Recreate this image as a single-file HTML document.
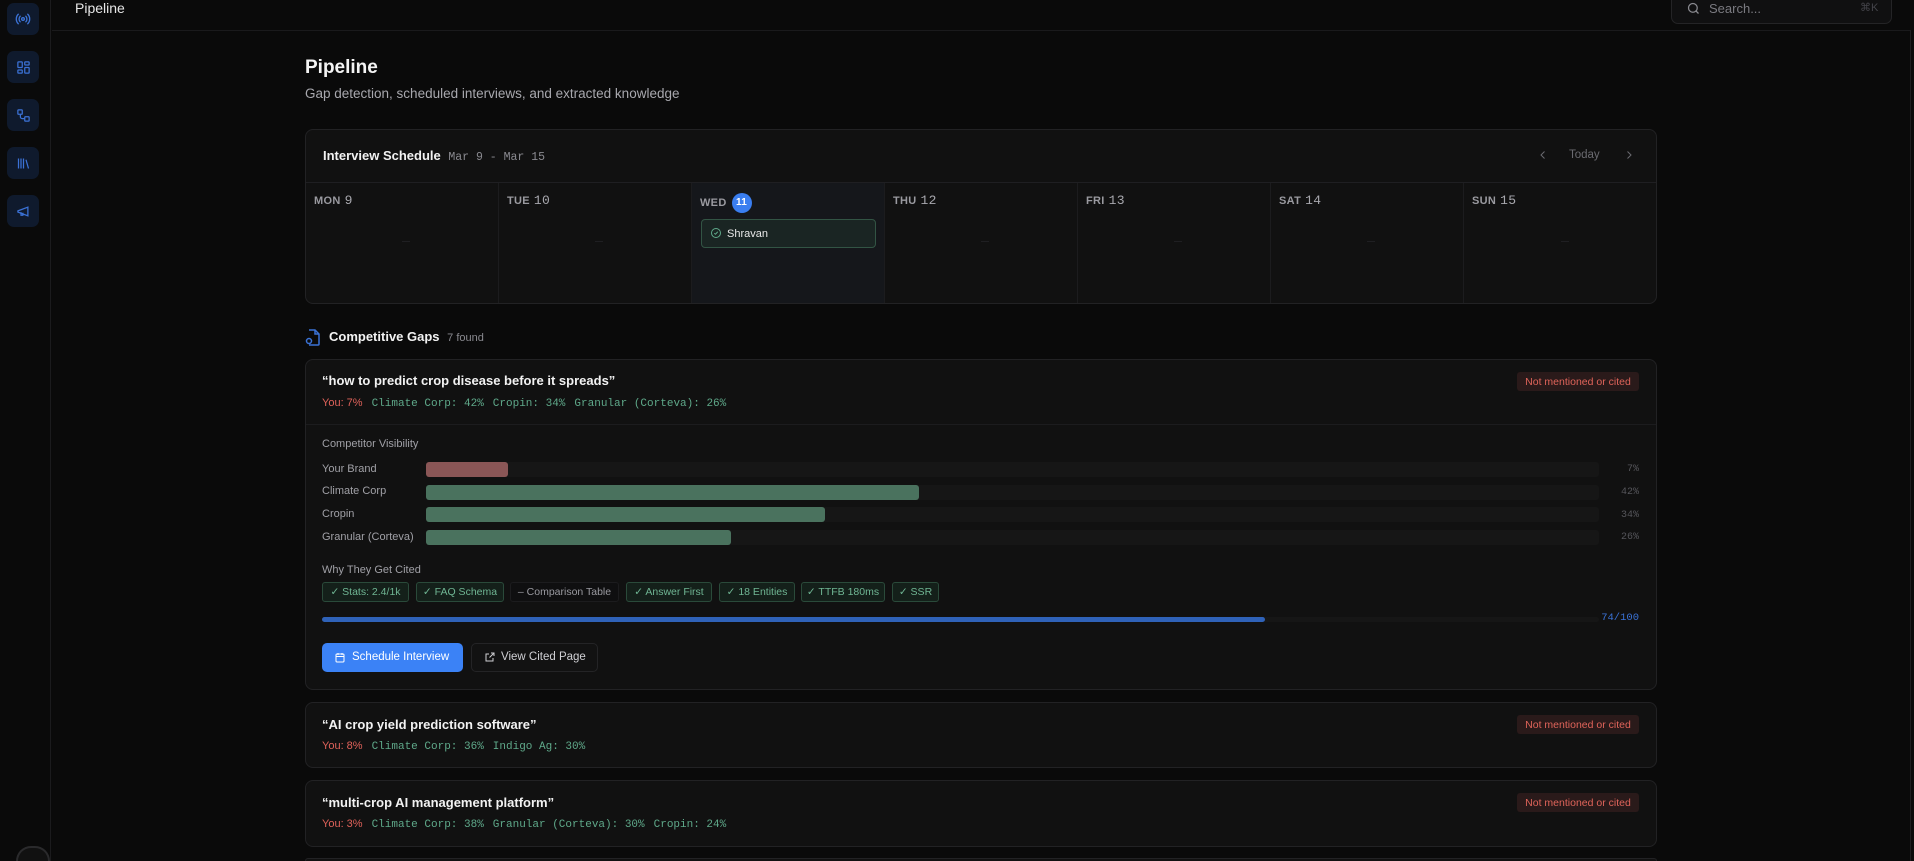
<!DOCTYPE html>
<html style="width:1914px;height:861px;overflow:hidden"><head><meta charset="utf-8"><style>
*{box-sizing:border-box;margin:0;padding:0}
body{width:1914px;height:861px;overflow:hidden;background:#0a0a0a;font-family:"Liberation Sans",sans-serif;color:#e8e8e8;position:relative}
.a{position:absolute}
.mono{font-family:"Liberation Mono",monospace}
.side{left:0;top:0;width:51px;height:861px;border-right:1px solid #1b1b1d;background:#0a0a0a}
.sib{left:7px;width:32px;height:32px;border-radius:7px;background:#0f1a2d;display:flex;align-items:center;justify-content:center}
.card{background:#111111;border:1px solid #222224;border-radius:8px}
.day{top:182px;height:120px;border-right:1px solid #1c1c1e}
.dl{position:absolute;left:8px;top:10px;font-size:11px;color:#9a9aa0;font-weight:bold;letter-spacing:.3px}
.dl b{font-family:"Liberation Mono",monospace;font-size:13px;color:#a8a8ae;font-weight:normal;margin-left:4px}
.dash{position:absolute;left:50%;top:58px;width:8px;height:1px;background:#1f1f22}
.lbl{font-size:11px;color:#a0a0a6}
.track{left:426px;width:1173px;height:15px;background:#161616;border-radius:3px}
.bar{left:426px;height:15px;border-radius:3px;background:#4a725e}
.pct{right:275px;font-size:10px;color:#55555a;font-family:"Liberation Mono",monospace}
.tag{top:582px;height:20px;border:1px solid #2a4a3a;background:#14201a;border-radius:3px;color:#6fb593;font-size:10.5px;display:flex;align-items:center;justify-content:center}
.badge{left:1517px;width:122px;height:19px;background:#2a1a1a;border-radius:3px;color:#e0645a;font-size:10.5px;display:flex;align-items:center;justify-content:center}
.qt{font-size:13px;font-weight:bold;color:#f2f2f2}
.st{font-size:11px}
.st .y{color:#e0625a;font-family:"Liberation Sans",sans-serif}
.st .g{color:#5fa98a;font-family:"Liberation Mono",monospace;margin-left:9px}
</style></head><body>
<div class="a side"></div>
<div class="a sib" style="top:3px"><svg width="16" height="16" viewBox="0 0 24 24" fill="none" stroke="#3b72d6" stroke-width="2" stroke-linecap="round"><circle cx="12" cy="12" r="2"/><path d="M16.2 7.8a6 6 0 0 1 0 8.4M7.8 16.2a6 6 0 0 1 0-8.4M19.1 4.9a10 10 0 0 1 0 14.2M4.9 19.1a10 10 0 0 1 0-14.2"/></svg></div>
<div class="a sib" style="top:51px"><svg width="15" height="15" viewBox="0 0 24 24" fill="none" stroke="#3b72d6" stroke-width="2"><rect x="3" y="3" width="7" height="9" rx="1"/><rect x="14" y="3" width="7" height="5" rx="1"/><rect x="14" y="12" width="7" height="9" rx="1"/><rect x="3" y="16" width="7" height="5" rx="1"/></svg></div>
<div class="a sib" style="top:99px"><svg width="15" height="15" viewBox="0 0 24 24" fill="none" stroke="#3b72d6" stroke-width="2"><rect x="3" y="3" width="7" height="7" rx="1"/><rect x="14" y="14" width="7" height="7" rx="1"/><path d="M7 10v4a3 3 0 0 0 3 3h4"/></svg></div>
<div class="a sib" style="top:147px"><svg width="15" height="15" viewBox="0 0 24 24" fill="none" stroke="#3b72d6" stroke-width="2"><path d="M4 4v16M8 4v16M12 4v16M16 6l4 14"/></svg></div>
<div class="a sib" style="top:195px"><svg width="15" height="15" viewBox="0 0 24 24" fill="none" stroke="#3b72d6" stroke-width="2"><path d="M3 11l16-6v14L3 13z"/><path d="M8 13v5h3v-4"/></svg></div>
<div class="a" style="left:16px;top:846px;width:34px;height:15px;border-radius:17px 17px 0 0;border:2px solid #2a2a2c;border-bottom:none;background:#111"></div>

<div class="a" style="left:52px;top:30px;width:1859px;height:1px;background:#1a1a1c"></div>
<div class="a" style="left:1910px;top:30px;width:1px;height:831px;background:#1e1e20"></div>
<div class="a" style="left:75px;top:0px;font-size:14px;color:#e6e6e6">Pipeline</div>
<div class="a" style="left:1671px;top:-10px;width:221px;height:34px;border:1px solid #242426;border-radius:7px;background:#101011"></div>
<svg class="a" style="left:1686px;top:1px" width="15" height="15" viewBox="0 0 24 24" fill="none" stroke="#8a8a90" stroke-width="2"><circle cx="11" cy="11" r="7"/><path d="M20 20l-4-4"/></svg>
<div class="a" style="left:1709px;top:1px;font-size:13px;color:#7a7a80">Search...</div>
<div class="a" style="left:1860px;top:1px;font-size:11px;color:#44444a">⌘K</div>

<div class="a" style="left:305px;top:57px;font-size:19px;font-weight:bold;color:#f4f4f4">Pipeline</div>
<div class="a" style="left:305px;top:86px;font-size:13.5px;color:#a8a8ae">Gap detection, scheduled interviews, and extracted knowledge</div>

<div class="a card" style="left:305px;top:129px;width:1352px;height:175px;overflow:hidden">
  <div class="a" style="left:0;top:52px;width:1352px;height:1px;background:#1f1f22"></div>
  <div class="a" style="left:17px;top:18px;font-size:13px;font-weight:bold;color:#f2f2f2">Interview Schedule <span class="mono" style="font-weight:normal;font-size:11.5px;color:#8a8a90;margin-left:4px">Mar 9 - Mar 15</span></div>
  <svg class="a" style="left:1231px;top:19px" width="12" height="12" viewBox="0 0 24 24" fill="none" stroke="#6a6a70" stroke-width="2"><path d="M15 5l-7 7 7 7"/></svg>
  <div class="a" style="left:1263px;top:19px;font-size:11.5px;color:#6a6a70">Today</div>
  <svg class="a" style="left:1317px;top:19px" width="12" height="12" viewBox="0 0 24 24" fill="none" stroke="#6a6a70" stroke-width="2"><path d="M9 5l7 7-7 7"/></svg>
  <div class="a day" style="left:0;top:53px;width:193px"><div class="dl">MON<b>9</b></div><div class="dash"></div></div>
  <div class="a day" style="left:193px;top:53px;width:193px"><div class="dl">TUE<b>10</b></div><div class="dash"></div></div>
  <div class="a day" style="left:386px;top:53px;width:193px;background:#15171b"><div class="dl">WED<span style="display:inline-block;width:20px;height:20px;border-radius:50%;background:#3a7ef0;color:#fff;font-size:10px;text-align:center;line-height:20px;margin-left:5px;vertical-align:middle">11</span></div>
    <div class="a" style="left:9px;top:36px;width:175px;height:29px;border:1px solid #325444;background:#1a2523;border-radius:4px;font-size:11px;color:#e8e8e8;padding:8px 0 0 25px">Shravan
      <svg class="a" style="left:8px;top:7px" width="12" height="12" viewBox="0 0 24 24" fill="none" stroke="#5fa98a" stroke-width="2"><circle cx="12" cy="12" r="9"/><path d="M8.5 12.5l2.5 2 4.5-5"/></svg></div></div>
  <div class="a day" style="left:579px;top:53px;width:193px"><div class="dl">THU<b>12</b></div><div class="dash"></div></div>
  <div class="a day" style="left:772px;top:53px;width:193px"><div class="dl">FRI<b>13</b></div><div class="dash"></div></div>
  <div class="a day" style="left:965px;top:53px;width:193px"><div class="dl">SAT<b>14</b></div><div class="dash"></div></div>
  <div class="a day" style="left:1158px;top:53px;width:194px;border-right:none"><div class="dl">SUN<b>15</b></div><div class="dash"></div></div>
</div>

<svg class="a" style="left:305px;top:329px" width="15" height="17" viewBox="0 0 15 17" fill="none" stroke="#3b72d6" stroke-width="1.5"><path d="M4 1h6l4 4v10a1 1 0 0 1-1 1H4"/><path d="M10 1v4h4"/><circle cx="4" cy="12" r="2.5"/></svg>
<div class="a" style="left:329px;top:329px;font-size:13px;font-weight:bold;color:#f2f2f2">Competitive Gaps <span style="font-weight:normal;font-size:11px;color:#8a8a90;margin-left:4px">7 found</span></div>

<div class="a card" style="left:305px;top:359px;width:1352px;height:331px"></div>
<div class="a" style="left:306px;top:424px;width:1350px;height:1px;background:#1c1c1e"></div>
<div class="a qt" style="left:322px;top:373px">“how to predict crop disease before it spreads”</div>
<div class="a badge" style="top:372px">Not mentioned or cited</div>
<div class="a st" style="left:322px;top:397px"><span class="y">You: 7%</span><span class="g">Climate Corp: 42%</span><span class="g">Cropin: 34%</span><span class="g">Granular (Corteva): 26%</span></div>
<div class="a lbl" style="left:322px;top:438px">Competitor Visibility</div>
<div class="a lbl" style="left:322px;top:463px">Your Brand</div>
<div class="a lbl" style="left:322px;top:485px">Climate Corp</div>
<div class="a lbl" style="left:322px;top:508px">Cropin</div>
<div class="a lbl" style="left:322px;top:531px">Granular (Corteva)</div>
<div class="a track" style="top:462px"></div><div class="a bar" style="top:462px;width:82px;background:#8a5656"></div>
<div class="a track" style="top:485px"></div><div class="a bar" style="top:485px;width:493px"></div>
<div class="a track" style="top:507px"></div><div class="a bar" style="top:507px;width:399px"></div>
<div class="a track" style="top:530px"></div><div class="a bar" style="top:530px;width:305px"></div>
<div class="a pct" style="top:464px">7%</div>
<div class="a pct" style="top:487px">42%</div>
<div class="a pct" style="top:510px">34%</div>
<div class="a pct" style="top:532px">26%</div>
<div class="a lbl" style="left:322px;top:564px">Why They Get Cited</div>
<div class="a tag" style="left:322px;width:87px">✓ Stats: 2.4/1k</div>
<div class="a tag" style="left:416px;width:88px">✓ FAQ Schema</div>
<div class="a tag" style="left:510px;width:109px;border-color:#1c1c1e;background:#0f0f10;color:#9a9aa0">– Comparison Table</div>
<div class="a tag" style="left:626px;width:86px">✓ Answer First</div>
<div class="a tag" style="left:719px;width:76px">✓ 18 Entities</div>
<div class="a tag" style="left:801px;width:84px">✓ TTFB 180ms</div>
<div class="a tag" style="left:892px;width:47px">✓ SSR</div>
<div class="a" style="left:322px;top:617px;width:1277px;height:5px;background:#161616;border-radius:3px"></div>
<div class="a" style="left:322px;top:617px;width:943px;height:5px;background:#2f62b8;border-radius:3px"></div>
<div class="a mono" style="right:275px;top:612px;font-size:10.5px;color:#3a72d6">74/100</div>
<div class="a" style="left:322px;top:643px;width:141px;height:29px;background:#3b82f6;border-radius:5px;color:#fff;font-size:11.5px;padding:8px 0 0 30px">Schedule Interview
  <svg class="a" style="left:12px;top:8px" width="12" height="13" viewBox="0 0 24 24" fill="none" stroke="#fff" stroke-width="2"><rect x="4" y="5" width="16" height="16" rx="2"/><path d="M4 10h16M8 3v4M16 3v4"/></svg></div>
<div class="a" style="left:471px;top:643px;width:127px;height:29px;background:#121212;border:1px solid #242426;border-radius:5px;color:#d0d0d4;font-size:11.5px;padding:7px 0 0 29px">View Cited Page
  <svg class="a" style="left:12px;top:7px" width="12" height="12" viewBox="0 0 24 24" fill="none" stroke="#d0d0d4" stroke-width="2"><path d="M14 4h6v6M20 4l-9 9M18 14v6H4V6h6"/></svg></div>

<div class="a card" style="left:305px;top:702px;width:1352px;height:66px"></div>
<div class="a qt" style="left:322px;top:717px">“AI crop yield prediction software”</div>
<div class="a badge" style="top:715px">Not mentioned or cited</div>
<div class="a st" style="left:322px;top:740px"><span class="y">You: 8%</span><span class="g">Climate Corp: 36%</span><span class="g">Indigo Ag: 30%</span></div>

<div class="a card" style="left:305px;top:780px;width:1352px;height:67px"></div>
<div class="a qt" style="left:322px;top:795px">“multi-crop AI management platform”</div>
<div class="a badge" style="top:793px">Not mentioned or cited</div>
<div class="a st" style="left:322px;top:818px"><span class="y">You: 3%</span><span class="g">Climate Corp: 38%</span><span class="g">Granular (Corteva): 30%</span><span class="g">Cropin: 24%</span></div>

<div class="a" style="left:305px;top:858px;width:1352px;height:3px;background:#111;border:1px solid #222224;border-bottom:none;border-radius:8px 8px 0 0"></div>
</body></html>
